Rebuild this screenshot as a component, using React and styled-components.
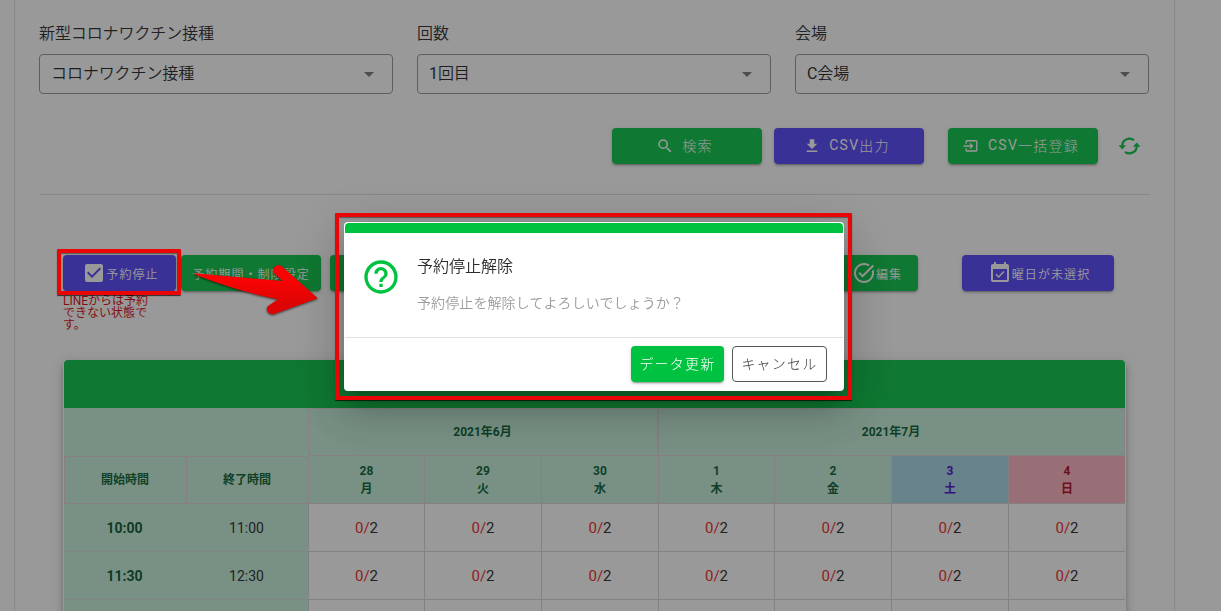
import React from "react";
import styled, { createGlobalStyle, css } from "styled-components";

const GREEN = "#00c241";
const PURPLE = "#5040fb";
const RED = "#e90606";

const Global = createGlobalStyle`
  *, *::before, *::after { box-sizing: border-box; }
  html, body { margin: 0; height: 100%; overflow: hidden; background: #fff; }
  body {
    font-family: Roboto, "Noto Sans CJK JP", sans-serif;
    color: rgba(0, 0, 0, 0.87);
    font-size: 16px;
    line-height: 24px;
  }
`;

const Page = styled.main`
  width: 1161px;
  height: 611px;
  margin-left: 14px;
  padding: 22px 24px 0;
  border: solid #e0e0e0;
  border-width: 0 1px;
  overflow: hidden;
`;

const Filters = styled.section`
  display: grid;
  grid-template-columns: repeat(3, 354px);
  gap: 24px;
`;

const Latin = styled.span`
  font-weight: 400;
`;

const Label = styled.div`
  height: 32px;
  font-weight: 350;
  letter-spacing: -0.1px;
  color: #222;
`;

const Select = styled.div`
  display: flex;
  align-items: center;
  justify-content: space-between;
  height: 40px;
  padding: 0 11px 0 11px;
  border: 1px solid #949494;
  border-radius: 4px;
  font-weight: 350;
  letter-spacing: -0.1px;
  color: #1c1c1c;
`;

const Actions = styled.div`
  display: flex;
  justify-content: flex-end;
  align-items: center;
  margin-top: 34px;
  padding-right: 8px;
  height: 36px;
`;

const Button = styled.button`
  display: inline-flex;
  align-items: center;
  justify-content: center;
  flex: none;
  width: ${(p) => p.$w}px;
  height: 36px;
  margin: 0 0 0 ${(p) => p.$ml || 0}px;
  padding: 0 0 ${(p) => (p.$small ? 0 : 2)}px;
  border: 0;
  border-radius: 4px;
  color: #fff;
  background: ${(p) => (p.$purple ? PURPLE : GREEN)};
  font-family: inherit;
  font-size: ${(p) => (p.$small ? 12 : 14)}px;
  font-weight: ${(p) => (p.$small ? 350 : 300)};
  letter-spacing: 0.0892857143em;
  white-space: nowrap;
  box-shadow: 0 3px 1px -2px rgba(0, 0, 0, 0.2), 0 2px 2px 0 rgba(0, 0, 0, 0.14),
    0 1px 5px 0 rgba(0, 0, 0, 0.12);
  svg {
    margin-right: ${(p) => (p.$small ? 0 : 8)}px;
    margin-left: ${(p) => (p.$small ? 2 : -5)}px;
    margin-top: ${(p) => (p.$small ? 0 : 1)}px;
  }
  ${(p) =>
    p.$outlined &&
    css`
      border: 1px solid #555;
      background: #fff;
      color: #333;
      box-shadow: none;
    `}
`;

const RefreshIcon = styled.span`
  display: flex;
  margin-left: 19px;
  color: ${GREEN};
`;

const Rule = styled.hr`
  width: 1111px;
  height: 1px;
  margin: 30px 0 0;
  border: 0;
  background: #dedede;
`;

const Tools = styled.section`
  display: flex;
  align-items: flex-start;
  height: 105px;
  margin-top: 60px;
  padding-left: 24px;
`;

const StopColumn = styled.div`
  width: 113px;
`;

const Notice = styled.p`
  width: 90px;
  margin: 3px 0 0;
  color: #d80000;
  font-size: 12px;
  font-weight: 400;
  line-height: 12px;
`;

const Card = styled.section`
  width: 1063px;
  margin-left: 24px;
  padding: 0 1px;
  border-radius: 4px;
  overflow: hidden;
  background: #fff;
  box-shadow: 0 3px 5px -1px rgba(0, 0, 0, 0.2), 0 5px 8px rgba(0, 0, 0, 0.14),
    0 1px 14px rgba(0, 0, 0, 0.12);
`;

const Banner = styled.div`
  height: 48px;
  border-radius: 4px 4px 0 0;
  background: ${GREEN};
`;

const Calendar = styled.div`
  display: grid;
  grid-template-columns: 244px 817px;
`;

const TimeSide = styled.div`
  display: grid;
  grid-template-columns: 122px 122px;
  grid-template-rows: 48px 48px;
  grid-auto-rows: 48px;
  background: #c4f1d9;
`;

const Center = styled.div`
  display: flex;
  flex-direction: column;
  align-items: center;
  justify-content: center;
  padding-right: 1px;
`;

const TimeBlank = styled(Center)`
  grid-column: span 2;
`;

const TimeHead = styled(Center)`
  border: solid #dccfd6;
  border-width: 1px 0 1px 1px;
  color: #005a2d;
  font-size: 12px;
  font-weight: 700;
`;

const TimeCell = styled(Center)`
  border-bottom: 1px solid #d8d8d8;
  font-size: 14px;
  font-weight: ${(p) => (p.$start ? 700 : 400)};
  color: ${(p) => (p.$start ? "#005026" : "#222")};
`;

const DaySide = styled.div`
  display: grid;
  grid-template-columns: 116px 117px 117px 116px 117px 117px 117px;
  grid-template-rows: 48px 48px;
  grid-auto-rows: 48px;
`;

const Month = styled(Center)`
  grid-column: span ${(p) => p.$span};
  border: 1px solid #dccfd6;
  background: #c4f1d9;
  color: #005a2d;
  font-size: 12px;
  font-weight: 700;
`;

const dayColors = {
  sat: ["#a5d7e8", "#4600c8"],
  sun: ["#ffb1c0", "#ad0010"],
  week: ["#c4f1d9", "#005a2d"],
};

const Day = styled(Center)`
  padding-right: 0;
  border: solid #dccfd6;
  border-width: 0 0 1px 1px;
  background: ${(p) => dayColors[p.$kind][0]};
  color: ${(p) => dayColors[p.$kind][1]};
  font-size: 12px;
  font-weight: 700;
  line-height: 18px;
`;

const Slot = styled(Center)`
  flex-direction: row;
  padding: 1px 0 0;
  border: solid #d4d4d4;
  border-width: 0 0 1px 1px;
  color: #222;
  font-size: 15px;
`;

const Booked = styled.span`
  color: #f02020;
`;

const Overlay = styled.div`
  position: fixed;
  inset: 0;
  display: flex;
  align-items: flex-start;
  justify-content: center;
  padding: 222px 33px 0 0;
  background: rgba(33, 33, 33, 0.46);
`;

const Dialog = styled.div`
  width: 500px;
  height: 169px;
  padding: 1px;
  border-radius: 4px;
  background: #fff;
  box-shadow: 0 11px 15px -7px rgba(0, 0, 0, 0.2), 0 24px 38px 3px rgba(0, 0, 0, 0.14),
    0 9px 46px 8px rgba(0, 0, 0, 0.12);
`;

const DialogBar = styled.div`
  height: 10px;
  border-radius: 4px 4px 0 0;
  background: ${GREEN};
`;

const DialogBody = styled.div`
  display: flex;
  height: 105px;
  padding: 22px 16px 0;
  border-bottom: 1px solid #e0e0e0;
`;

const HelpIcon = styled.span`
  display: flex;
  width: 56px;
  padding-top: 2px;
  color: ${GREEN};
`;

const DialogTitle = styled.div`
  font-weight: 350;
  color: #2c2c2c;
`;

const DialogText = styled.div`
  margin-top: 12px;
  color: #9c9c9c;
  font-size: 14px;
  font-weight: 350;
  letter-spacing: 0.1px;
`;

const DialogActions = styled.div`
  display: flex;
  justify-content: flex-end;
  padding: 8px 16px 0;
`;

const Frame = styled.div`
  position: absolute;
  left: ${(p) => p.$x}px;
  top: ${(p) => p.$y}px;
  width: ${(p) => p.$w}px;
  height: ${(p) => p.$h}px;
  border: ${(p) => p.$b}px solid ${RED};
  border-radius: 1px;
  box-shadow: 0 1px 1px rgba(0, 0, 0, 0.7), inset 0 1px 1px rgba(0, 0, 0, 0.4);
`;

const Arrow = styled.svg`
  position: absolute;
  left: 190px;
  top: 260px;
  filter: drop-shadow(0 1px 1px rgba(0, 0, 0, 0.6));
`;

const icons = {
  magnify:
    "M9.5,3A6.5,6.5 0 0,1 16,9.5C16,11.11 15.41,12.59 14.44,13.73L14.71,14H15.5L20.5,19L19,20.5L14,15.5V14.71L13.73,14.44C12.59,15.41 11.11,16 9.5,16A6.5,6.5 0 0,1 3,9.5A6.5,6.5 0 0,1 9.5,3M9.5,5C7,5 5,7 5,9.5C5,12 7,14 9.5,14C12,14 14,12 14,9.5C14,7 12,5 9.5,5Z",
  download: "M5,20H19V18H5M19,9H15V3H9V9H5L12,16L19,9Z",
  checkbox:
    "M10,17L5,12L6.41,10.58L10,14.17L17.59,6.58L19,8M19,3H5C3.89,3 3,3.89 3,5V19A2,2 0 0,0 5,21H19A2,2 0 0,0 21,19V5C21,3.89 20.1,3 19,3Z",
  task:
    "M22,5.18L10.59,16.6l-4.24-4.24l1.41-1.41l2.83,2.83l10-10L22,5.18z M19.79,10.22C19.92,10.79,20,11.39,20,12 c0,4.42-3.58,8-8,8s-8-3.58-8-8c0-4.42,3.58-8,8-8c1.58,0,3.04,0.46,4.28,1.25l1.44-1.44C16.1,2.67,14.13,2,12,2C6.48,2,2,6.48,2,12 c0,5.52,4.48,10,10,10s10-4.48,10-10c0-1.19-0.22-2.33-0.6-3.39L19.79,10.22z",
  calendar:
    "M16.53 11.06L15.47 10l-4.88 4.88-2.12-2.12-1.06 1.06L10.59 17l5.94-5.94zM19 3h-1V1h-2v2H8V1H6v2H5c-1.11 0-1.99.9-1.99 2L3 19c0 1.1.89 2 2 2h14c1.1 0 2-.9 2-2V5c0-1.1-.9-2-2-2zm0 16H5V8h14v11z",
  help:
    "M11 18h2v-2h-2v2zm1-16C6.48 2 2 6.48 2 12s4.48 10 10 10 10-4.48 10-10S17.52 2 12 2zm0 18c-4.41 0-8-3.59-8-8s3.59-8 8-8 8 3.59 8 8-3.59 8-8 8zm0-14c-2.21 0-4 1.79-4 4h2c0-1.1.9-2 2-2s2 .9 2 2c0 2-3 1.75-3 5h2c0-2.25 3-2.5 3-5 0-2.21-1.79-4-4-4z",
  caret: "M7,10L12,15L17,10H7Z",
};

const Icon = ({ name, size = 24, color = "currentColor" }) => (
  <svg width={size} height={size} viewBox="0 0 24 24" fill={color} aria-hidden="true">
    <path d={icons[name]} />
  </svg>
);

const EnterIcon = () => (
  <svg width="18" height="18" viewBox="0 0 24 24" fill="none" stroke="currentColor" strokeWidth="1.8">
    <path d="M5.500 9V6.200Q5.500 5 6.700 5H18.500Q19.700 5 19.700 6.200V17.500Q19.700 18.700 18.500 18.700H6.700Q5.500 18.700 5.500 17.500V15" />
    <path d="M2 12H14M10.500 8.500L14 12L10.500 15.500" />
  </svg>
);

const SyncIcon = () => (
  <svg width="25" height="24" viewBox="0 0 25 24" fill="currentColor">
    <g fill="none" stroke="currentColor" strokeWidth="2.2">
      <path d="M5.300 12A7.200 7 0 0 1 17 6.200" />
      <path d="M19.700 12A7.200 7 0 0 1 8 17.800" />
    </g>
    <path d="M1.500 11.300H9.100L5.300 15.400ZM15.900 12.700H23.500L19.700 8.600Z" />
  </svg>
);

const filters = [
  ["新型コロナワクチン接種", "", "コロナワクチン接種"],
  ["回数", "1", "回目"],
  ["会場", "C", "会場"],
];

const days = [
  ["28", "月", "week"],
  ["29", "火", "week"],
  ["30", "水", "week"],
  ["1", "木", "week"],
  ["2", "金", "week"],
  ["3", "土", "sat"],
  ["4", "日", "sun"],
];

const times = [
  ["10:00", "11:00"],
  ["11:30", "12:30"],
  ["", ""],
];

export default function App() {
  return (
    <>
      <Global />
      <Page>
        <Filters>
          {filters.map(([label, prefix, value]) => (
            <div key={label}>
              <Label>{label}</Label>
              <Select>
                <span>{prefix && <Latin>{prefix}</Latin>}{value}</span>
                <Icon name="caret" color="#757575" />
              </Select>
            </div>
          ))}
        </Filters>
        <Actions>
          <Button $w={150}><Icon name="magnify" size={18} />検索</Button>
          <Button $w={150} $ml={12} $purple><Icon name="download" size={18} /><Latin>CSV</Latin>出力</Button>
          <Button $w={150} $ml={24}><EnterIcon /><Latin>CSV</Latin>一括登録</Button>
          <RefreshIcon><SyncIcon /></RefreshIcon>
        </Actions>
        <Rule />
        <Tools>
          <StopColumn>
            <Button $w={113} $small $purple><Icon name="checkbox" />予約停止</Button>
            <Notice>LINEからは予約できない状態です。</Notice>
          </StopColumn>
          <Button $w={140} $ml={5} $small>予約期間・制限設定</Button>
          <Button $w={140} $ml={9} $small />
          <Button $w={84} $ml={364} $small><Icon name="task" />編集</Button>
          <Button $w={152} $ml={44} $small $purple><Icon name="calendar" />曜日が未選択</Button>
        </Tools>
        <Card>
          <Banner />
          <Calendar>
            <TimeSide>
              <TimeBlank />
              <TimeHead>開始時間</TimeHead>
              <TimeHead>終了時間</TimeHead>
              {times.map(([start, end], i) => (
                <React.Fragment key={i}>
                  <TimeCell $start>{start}</TimeCell>
                  <TimeCell>{end}</TimeCell>
                </React.Fragment>
              ))}
            </TimeSide>
            <DaySide>
              <Month $span={3}>2021年6月</Month>
              <Month $span={4}>2021年7月</Month>
              {days.map(([date, name, kind]) => (
                <Day key={date} $kind={kind}>
                  <span>{date}</span>
                  <span>{name}</span>
                </Day>
              ))}
              {times.map(([start], r) =>
                days.map(([date]) => (
                  <Slot key={`${r}-${date}`}>
                    {start && (<><Booked>0/</Booked>2</>)}
                  </Slot>
                ))
              )}
            </DaySide>
          </Calendar>
        </Card>
      </Page>
      <Overlay>
        <Dialog role="dialog">
          <DialogBar />
          <DialogBody>
            <HelpIcon><Icon name="help" size={40} /></HelpIcon>
            <div>
              <DialogTitle>予約停止解除</DialogTitle>
              <DialogText>予約停止を解除してよろしいでしょうか？</DialogText>
            </div>
          </DialogBody>
          <DialogActions>
            <Button $w={93}>データ更新</Button>
            <Button $w={95} $ml={8} $outlined>キャンセル</Button>
          </DialogActions>
        </Dialog>
      </Overlay>
      <Frame $x={57} $y={249} $w={124} $h={46} $b={4} />
      <Frame $x={335} $y={213} $w={517} $h={187} $b={4} />
      <Arrow width="134" height="62" viewBox="0 0 134 62">
        <defs>
          <linearGradient id="arrowFill" x1="0" y1="0" x2="0" y2="1">
            <stop offset="0.3" stopColor="#f80404" />
            <stop offset="0.8" stopColor="#dc0404" />
          </linearGradient>
        </defs>
        <path
          fill="url(#arrowFill)"
          d="M4.500 13.300L92.500 21L84.500 13.500C81.500 9 85 4.500 90 5.500Q92 6 94 8.300L127.800 38.300L84 54Q79 55 77 50.500Q75.800 47 79.500 45L88 39.500Q46 31 5.500 14.800Q4 14 4.500 13.300Z"
        />
      </Arrow>
    </>
  );
}
